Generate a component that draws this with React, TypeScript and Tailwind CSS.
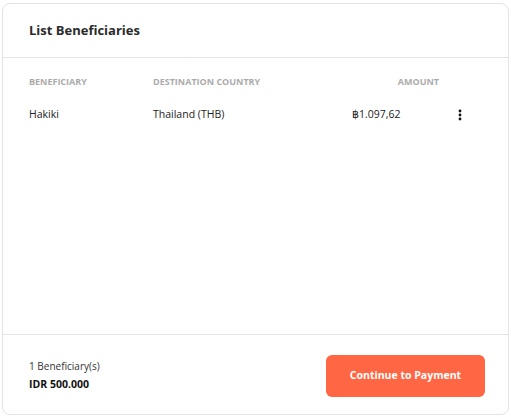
import React from 'react';

const rows = [{ name: 'Hakiki', country: 'Thailand (THB)', amount: '฿1.097,62' }];

const App: React.FC = () => {
  return (
    <div className="w-[511px] h-[416px] bg-white pl-[2px] pt-[3px] font-['Open_Sans',sans-serif] text-[#222]">
      <div className="w-[507px] h-[412px] border border-[#e3e3e3] rounded-lg flex flex-col">
        <div className="h-[54px] flex items-center px-[26px] border-b border-[#e3e3e3]">
          <h3 className="text-[13px] font-bold text-[#2b2b2b]">List Beneficiaries</h3>
        </div>

        <div className="flex-1">
          <div className="flex items-center h-[46px] pt-[1px] text-[9px] font-bold text-[#ababab] uppercase">
            <div className="w-[150px] pl-[26px]">Beneficiary</div>
            <div className="w-[200px]">Destination Country</div>
            <div className="w-[86px] text-right">Amount</div>
          </div>
          {rows.map((r, i) => (
            <div key={i} className="flex items-center h-[22px] text-[10.5px] text-[#222]">
              <div className="w-[150px] pl-[26px]">{r.name}</div>
              <div className="w-[199px]">{r.country}</div>
              <div className="w-[60px]">{r.amount}</div>
              <div className="w-[50px] flex justify-end">
                <svg width="4" height="12" viewBox="0 0 4 12" fill="#111">
                  <circle cx="2" cy="2" r="1.4" />
                  <circle cx="2" cy="6" r="1.4" />
                  <circle cx="2" cy="10" r="1.4" />
                </svg>
              </div>
            </div>
          ))}
        </div>

        <div className="h-[80px] pt-[2px] border-t border-[#e3e3e3] flex items-center justify-between pl-[26px] pr-[23px]">
          <div className="flex flex-col gap-[3px] pt-[1px]">
            <span className="text-[10px] text-[#333]">1 Beneficiary(s)</span>
            <span className="text-[10.5px] font-bold text-[#111]">IDR 500.000</span>
          </div>
          <button className="w-[159px] h-[42px] rounded-md bg-[#ff6643] text-white text-[10.5px] font-bold">
            Continue to Payment
          </button>
        </div>
      </div>
    </div>
  );
};

export default App;
